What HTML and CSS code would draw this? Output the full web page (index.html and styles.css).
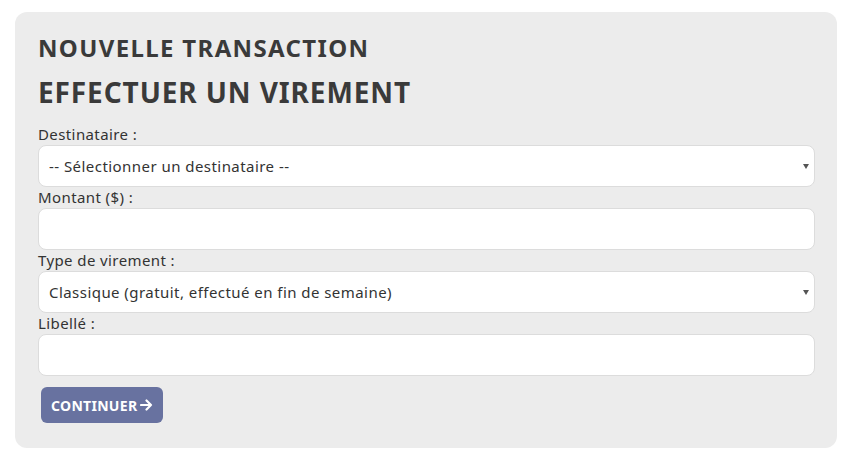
FILE: index.html
```html
<!DOCTYPE html>
<html lang="fr">
<head>
  <meta charset="UTF-8">
  <meta name="viewport" content="width=device-width, initial-scale=1.0">
  <title>Nouvelle transaction</title>
  <link rel="stylesheet" href="styles.css">
</head>
<body>
  <section class="transfer-card">
    <h1>Nouvelle transaction</h1>
    <h2>Effectuer un virement</h2>
    <form id="transfer-form" class="transfer-form">
      <label for="recipient">Destinataire :</label>
      <div class="select-wrap">
        <select id="recipient" name="recipient">
          <option value="">-- Sélectionner un destinataire --</option>
        </select>
      </div>

      <label for="amount">Montant ($) :</label>
      <input type="text" id="amount" name="amount">

      <label for="transfer-type">Type de virement :</label>
      <div class="select-wrap">
        <select id="transfer-type" name="transfer-type">
          <option value="classic">Classique (gratuit, effectué en fin de semaine)</option>
        </select>
      </div>

      <label for="label">Libellé :</label>
      <input type="text" id="label" name="label">

      <div class="actions">
        <button type="submit">Continuer
          <svg class="arrow" width="13" height="12" viewBox="0 0 13 12" aria-hidden="true">
            <path d="M1 6 H11 M6.5 1.5 L11 6 L6.5 10.5" fill="none" stroke="#fff" stroke-width="2.2" stroke-linecap="round" stroke-linejoin="round"/>
          </svg>
        </button>
      </div>
    </form>
  </section>
</body>
</html>
```

FILE: styles.css
```css
body {
  font-family: 'Noto Sans', 'Open Sans', sans-serif;
  background: #ffffff;
  color: #333;
  margin: 0;
  padding: 12px 22px 0 15px;
}

.transfer-card {
  background-color: #ececec;
  border-radius: 12px;
  padding: 21px 22px 25px 23px;
}

h1, h2 {
  margin: 0;
  color: #3a3a3a;
  text-transform: uppercase;
  font-weight: 700;
}

h1 {
  font-size: 24px;
  line-height: 30px;
  letter-spacing: 1.35px;
}

h2 {
  font-size: 28px;
  line-height: 34px;
  letter-spacing: 0.9px;
  margin-top: 12px;
  margin-bottom: 15px;
}

.transfer-form {
  display: flex;
  flex-direction: column;
}

label {
  font-size: 15px;
  line-height: 21px;
  letter-spacing: 0.4px;
  color: #333;
}

input, select {
  width: 100%;
  height: 42px;
  box-sizing: border-box;
  border: 1px solid #dcdcdc;
  border-radius: 8px;
  background: #fff;
  font-family: inherit;
  font-size: 15px;
  letter-spacing: 0.45px;
  color: #333;
  padding: 0 10px;
  margin: 0;
}

select {
  appearance: none;
  -webkit-appearance: none;
  padding-right: 30px;
}

.select-wrap {
  position: relative;
}

/* small dropdown triangle */
.select-wrap::after {
  content: "";
  position: absolute;
  right: 6px;
  top: 19px;
  border-left: 3.5px solid transparent;
  border-right: 3.5px solid transparent;
  border-top: 5px solid #555;
  pointer-events: none;
}

.actions {
  margin-top: 11px;
  padding-left: 3px;
}

button {
  display: inline-flex;
  align-items: center;
  gap: 3px;
  background-color: #6872a0;
  color: #fff;
  border: none;
  border-radius: 6px;
  height: 36px;
  padding: 0 10px;
  font-family: inherit;
  font-size: 14px;
  font-weight: 700;
  letter-spacing: 0.3px;
  text-transform: uppercase;
  cursor: pointer;
}
```
